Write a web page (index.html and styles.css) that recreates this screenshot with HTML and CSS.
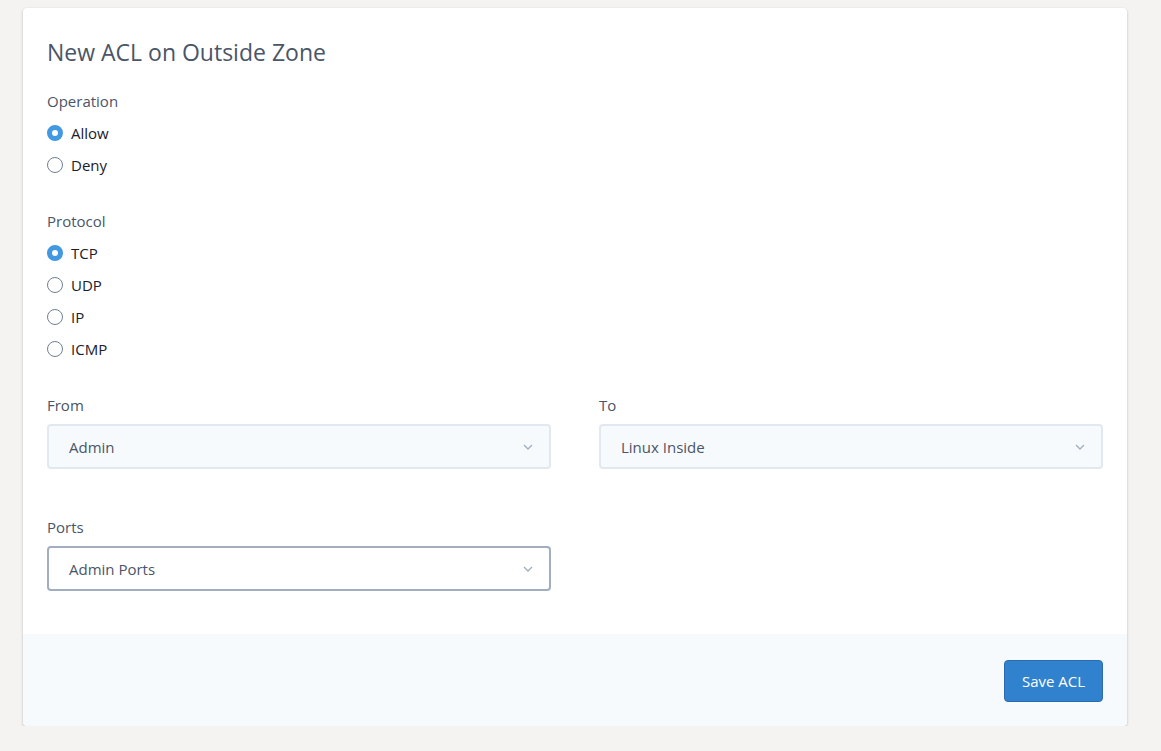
FILE: index.html
```html
<!DOCTYPE html>
<html>
<head>
<meta charset="utf-8">
<link rel="stylesheet" href="styles.css">
</head>
<body>
<div class="card">
  <div class="card-body">
    <h1 class="title">New ACL on Outside Zone</h1>
    <div class="group">
      <div class="label">Operation</div>
      <label class="radio"><span class="dot checked"></span>Allow</label>
      <label class="radio"><span class="dot"></span>Deny</label>
    </div>
    <div class="group">
      <div class="label">Protocol</div>
      <label class="radio"><span class="dot checked"></span>TCP</label>
      <label class="radio"><span class="dot"></span>UDP</label>
      <label class="radio"><span class="dot"></span>IP</label>
      <label class="radio"><span class="dot"></span>ICMP</label>
    </div>
    <div class="cols">
      <div class="field">
        <div class="label">From</div>
        <div class="select"><span>Admin</span><svg class="chev" viewBox="0 0 10 6" width="10" height="6"><path d="M1 1 L5 5 L9 1" fill="none" stroke="#a0aec0" stroke-width="1.3"/></svg></div>
      </div>
      <div class="field">
        <div class="label">To</div>
        <div class="select"><span>Linux Inside</span><svg class="chev" viewBox="0 0 10 6" width="10" height="6"><path d="M1 1 L5 5 L9 1" fill="none" stroke="#a0aec0" stroke-width="1.3"/></svg></div>
      </div>
    </div>
    <div class="cols ports">
      <div class="field">
        <div class="label">Ports</div>
        <div class="select focus"><span>Admin Ports</span><svg class="chev" viewBox="0 0 10 6" width="10" height="6"><path d="M1 1 L5 5 L9 1" fill="none" stroke="#a0aec0" stroke-width="1.3"/></svg></div>
      </div>
      <div></div>
    </div>
  </div>
  <div class="card-footer">
    <button class="btn">Save ACL</button>
  </div>
</div>
</body>
</html>
```

FILE: styles.css
```css
html, body {
  margin: 0;
  padding: 0;
  background: #f4f3f2;
  font-family: "Open Sans", "Noto Sans", sans-serif;
}
body {
  padding: 8px 34px 0 23px;
}
.card {
  background: #fff;
  border-radius: 4px;
  box-shadow: 0 1px 3px rgba(0,0,0,0.18), 0 1px 2px rgba(0,0,0,0.08);
  overflow: hidden;
}
.card-body {
  padding: 28px 24px 43px 24px;
}
.title {
  margin: 0 0 23px 0;
  font-size: 23px;
  font-weight: 400;
  line-height: 32px;
  color: #4a5568;
}
.group {
  display: flex;
  flex-direction: column;
  margin-bottom: 30px;
}
.label {
  font-size: 15px;
  color: #4a5568;
  line-height: 20px;
  margin-bottom: 6px;
}
.radio {
  display: flex;
  align-items: center;
  font-size: 15px;
  color: #1a202c;
  height: 32px;
}
.dot {
  width: 16px;
  height: 16px;
  box-sizing: border-box;
  border: 1px solid #718096;
  border-radius: 50%;
  margin-right: 8px;
  background: #fff;
}
.dot.checked {
  border: 5px solid #4299e1;
  background: #fff;
}
.cols {
  display: grid;
  grid-template-columns: 1fr 1fr;
  column-gap: 48px;
  margin-top: 3px;
}
.ports {
  margin-top: 48px;
}
.field .label {
  margin-bottom: 9px;
}
.select {
  height: 45px;
  box-sizing: border-box;
  border: 2px solid #e2e8f0;
  border-radius: 4px;
  background: #f7fafc;
  display: flex;
  align-items: center;
  justify-content: space-between;
  padding: 0 16px 0 20px;
  font-size: 15px;
  color: #4a5568;
}
.select.focus {
  background: #fff;
  border-color: #a0aec0;
}
.card-footer {
  background: #f7fafc;
  height: 92px;
  box-sizing: border-box;
  padding: 26px 24px;
  display: flex;
  justify-content: flex-end;
  align-items: flex-start;
}
.btn {
  width: 99px;
  height: 42px;
  background: #3182ce;
  color: #fff;
  border: 1px solid #2b6cb0;
  border-radius: 4px;
  font-family: inherit;
  font-size: 15px;
  cursor: pointer;
}
```
